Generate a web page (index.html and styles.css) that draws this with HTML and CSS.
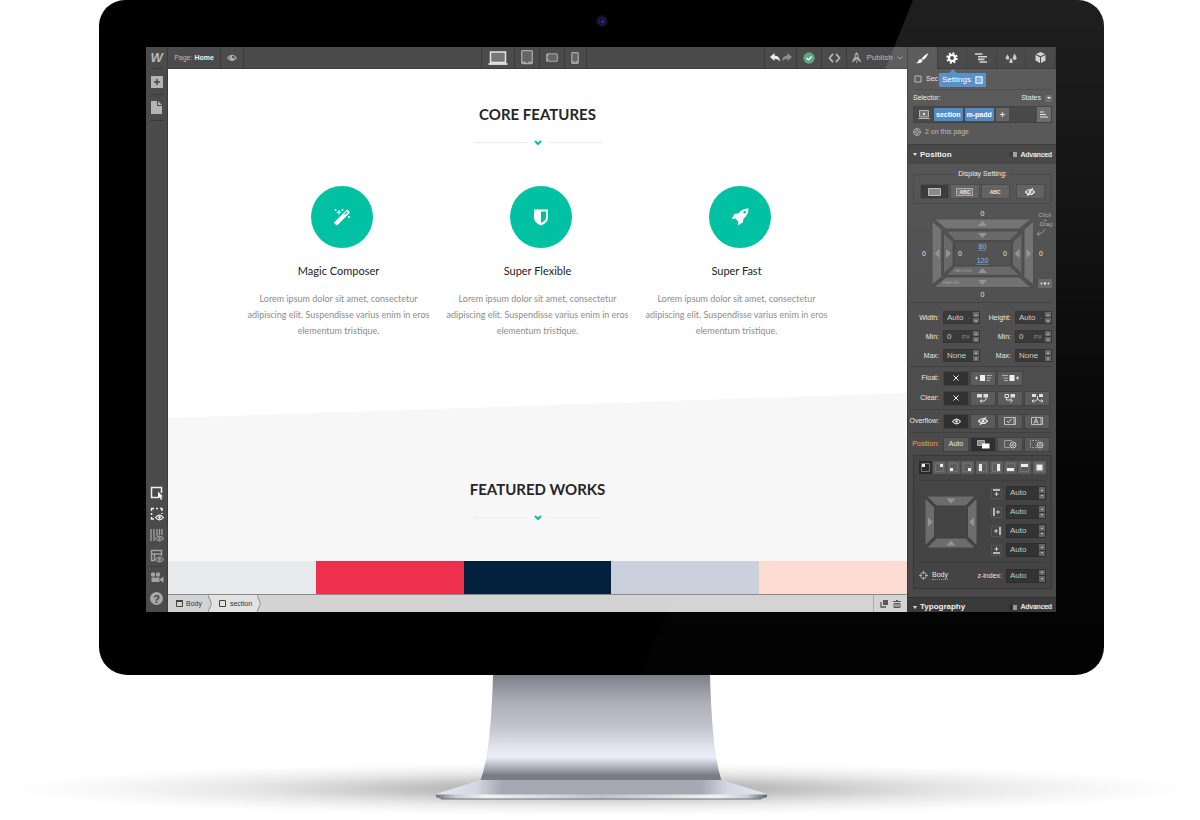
FILE: index.html
```html
<!DOCTYPE html>
<html lang="en">
<head>
<meta charset="utf-8">
<title>Site designer</title>
<link rel="stylesheet" href="styles.css">
</head>
<body>
<svg class="defs" aria-hidden="true">
  <symbol id="eye" viewBox="0 0 10 8"><path d="M0.5 4Q5-1.5 9.500 4Q5 9.500 .5 4Z" fill="none" stroke="currentColor" stroke-width="1.300"/><circle cx="5" cy="4" r="1.500" fill="currentColor"/></symbol>
  <symbol id="noeye" viewBox="0 0 10 8"><path d="M.5 4Q5-1 9.500 4Q5 9 .5 4Z" fill="none" stroke="currentColor" stroke-width="1.200"/><circle cx="5" cy="4" r="1.400" fill="currentColor"/><path d="M2 8L8 0" stroke="currentColor" stroke-width="1.200"/></symbol>
  <symbol id="cross" viewBox="0 0 8 8"><path d="M1.500 1.500L6.500 6.500M6.500 1.500L1.500 6.500" stroke="currentColor" stroke-width="1"/></symbol>
  <symbol id="divider" viewBox="0 0 128 12"><path d="M0 5.500H54M74 5.500H128" stroke="#ececec"/><path d="M61 4L64 7L67 4" fill="none" stroke="#00c2a3" stroke-width="2"/></symbol>
</svg>
<main class="monitor">
  <svg class="camera" viewBox="0 0 14 14" aria-hidden="true"><circle cx="7" cy="7" r="6" fill="#101016"/><circle cx="7" cy="7" r="3.500" fill="#11103c" stroke="#24215f"/><circle cx="7.500" cy="7.500" r="1.200" fill="#3b35c0"/></svg>
  <div class="screen">
    <nav class="rail" aria-label="Tools">
      <a class="logo" href="#home">W</a>
      <button class="tool add" aria-label="Add"><svg width="12" height="12"><path d="M0 0H12V12H0Z" fill="#b4b4b4"/><path d="M6 3V9M3 6H9" stroke="#444" stroke-width="1.500"/></svg></button>
      <button class="tool pages" aria-label="Pages"><svg width="11" height="13"><path d="M0 0H6V5H11V13H0ZM7 0L11 4H7Z" fill="#b4b4b4"/></svg></button>
      <div class="rail-low">
        <button class="tool on" aria-label="Select"><svg width="14" height="14"><path d="M8 11.500H1.500V1.500H11.500V7" fill="none" stroke="#eee" stroke-width="1.500"/><path d="M8 5.500L13 10.500L11 10.700L12.300 13.300L11 14L9.800 11.300L8 12.500Z" fill="#fff"/></svg></button>
        <button class="tool on" aria-label="Outlines"><svg width="14" height="14"><path d="M1.500 4V1.500H4M6 1.500H8M10 1.500H12V4M12 6V7M1.500 6V8M1.500 10V12H4" fill="none" stroke="#eee" stroke-width="1.500"/><use href="#eye" x="5" y="7" width="9" height="7"/></svg></button>
        <button class="tool" aria-label="Grid"><svg width="14" height="14"><path d="M1 1V13M4 1V13M7 1V8M9.500 1V7M12 1V7" stroke="#a2a2a2" stroke-width="1.300"/><use href="#eye" x="5" y="7" width="9" height="7"/></svg></button>
        <button class="tool" aria-label="Layout"><svg width="14" height="14"><path d="M5 11.500H1.500V1.500H11.500V7M1.500 5H11.500M4.500 5V11" fill="none" stroke="#a2a2a2" stroke-width="1.500"/><use href="#eye" x="5" y="7" width="9" height="7"/></svg></button>
        <button class="tool film" aria-label="Videos"><svg width="14" height="11"><circle cx="3" cy="2.500" r="2.200" fill="#a2a2a2"/><circle cx="8" cy="2.500" r="2.200" fill="#a2a2a2"/><path d="M1.500 5.500H9.500V10H1.500ZM10 7L13.500 4.500V10.500L10 8.500Z" fill="#a2a2a2"/></svg></button>
        <button class="help" aria-label="Help">?</button>
      </div>
    </nav>
    <div class="work">
      <header class="bar">
        <div class="group first">
          <button class="cell page-name">Page: <b>Home</b></button>
          <button class="cell preview" aria-label="Preview"><svg width="10" height="8"><path d="M.6 4Q5-1.500 9.400 4Q5 9.500 .6 4Z" fill="none" stroke="#b0b0b0" stroke-width="1.200"/><path d="M5 1.800V4H7.500A2.500 2.300 0 1 1 5 1.800Z" fill="#b0b0b0"/></svg></button>
        </div>
        <div class="group devices">
          <button class="cell desktop" aria-label="Desktop"><svg width="20" height="14"><path d="M2.500 1H17.500V11.500H2.500Z" fill="#777" stroke="#e6e6e6" stroke-width="1.500"/><path d="M.5 13H19.500" stroke="#f5f5f5" stroke-width="1.600"/></svg></button>
          <button class="cell" aria-label="Tablet"><svg width="12" height="15"><rect x=".7" y=".7" width="10.600" height="13" rx="1" fill="#666" stroke="#ababab" stroke-width="1.200"/><path d="M1 12.500H5M7 12.500H11" stroke="#ababab" stroke-width="1.500"/></svg></button>
          <button class="cell" aria-label="Phone landscape"><svg width="12" height="9"><rect x=".7" y=".7" width="10.600" height="7.500" rx="1" fill="#666" stroke="#ababab" stroke-width="1.100"/><path d="M1.500 1V3.500M1.500 5.500V8" stroke="#ababab" stroke-width="1.500"/></svg></button>
          <button class="cell phone" aria-label="Phone"><svg width="8" height="12"><rect x=".7" y=".7" width="6.600" height="10.600" rx="1" fill="#666" stroke="#ababab" stroke-width="1.200"/><path d="M1 10H3.500M4.500 10H7" stroke="#ababab" stroke-width="1.500"/></svg></button>
        </div>
        <div class="group last">
          <button class="cell history" aria-label="Undo and redo"><svg width="22" height="10"><path d="M0 4L4.500 0V2.500Q9.500 2.500 10 8.500Q8 5.500 4.500 5.700V8Z" fill="#eee"/><path d="M22 4L17.500 0V2.500Q12.500 2.500 12 8.500Q14 5.500 17.500 5.700V8Z" fill="#8d8d8d"/></svg></button>
          <button class="cell" aria-label="Saved"><svg width="12" height="12"><circle cx="6" cy="6" r="5.700" fill="#5fa583"/><path d="M3.500 6L5.500 8L8.700 4.500" fill="none" stroke="#fff" stroke-width="1.200"/></svg></button>
          <button class="cell" aria-label="Code"><svg width="13" height="10"><path d="M5 .8L1.500 5L5 9.200M8 .8L11.500 5L8 9.200" fill="none" stroke="#b4b4b4" stroke-width="1.800"/></svg></button>
          <button class="cell publish"><svg width="11" height="11"><path d="M5.500 0Q8 2 7.700 5L10.500 10.500L7.500 9L5.500 7.500L3.500 9L.5 10.500L3.300 5Q3 2 5.500 0ZM5 9H6V11H5Z" fill="#a9a9a9"/><circle cx="5.500" cy="4" r="1.100" fill="#4b4b4b"/></svg>Publish<svg width="6" height="4"><path d="M.5 .5L3 3L5.500 .5" fill="none" stroke="#a0a0a0"/></svg></button>
        </div>
      </header>
      <article class="canvas">
        <section class="features">
          <h2>CORE FEATURES</h2>
          <svg class="rule" width="128" height="12" aria-hidden="true"><use href="#divider"/></svg>
          <div class="cols">
            <div class="feature">
              <span class="disc"><svg width="18" height="18"><path d="M2.800 16.800L.8 14.800L13.300 2.300Q14.300 1.300 15.300 2.300L16.300 3.300Q17.300 4.300 16.300 5.300L4.800 16.800Q3.800 17.800 2.800 16.800Z" fill="#fff"/><path d="M12 6L14 4" stroke="#00c2a3" stroke-width="1.300" stroke-linecap="round"/><path d="M6 2V6.500M3.700 4.200H8.300M9.500 1V3M8.500 2H10.500M2.500 1V3M1.500 2H3.500M16 8V10M15 9H17" stroke="#fff" stroke-width="1"/></svg></span>
              <h3>Magic Composer</h3>
              <p>Lorem ipsum dolor sit amet, consectetur adipiscing elit. Suspendisse varius enim in eros elementum tristique.</p>
            </div>
            <div class="feature">
              <span class="disc"><svg width="14" height="17"><path d="M0 .5H14V8.500Q14 13.500 7 16.500Q0 13.500 0 8.500ZM7 2.500V14Q12 11.500 12 8.500V2.500Z" fill="#fff" fill-rule="evenodd"/></svg></span>
              <h3>Super Flexible</h3>
              <p>Lorem ipsum dolor sit amet, consectetur adipiscing elit. Suspendisse varius enim in eros elementum tristique.</p>
            </div>
            <div class="feature">
              <span class="disc"><svg width="18" height="18"><path d="M17.500 .5Q11 .5 7.500 5.500L3.500 6L.5 11L4.500 10.500L5.800 12L7.300 13.500L6.800 17.500L11.800 14.500L12.500 10.500Q17.500 7 17.500 .5Z" fill="#fff"/><circle cx="13.700" cy="4.300" r="1.300" fill="#00c2a3"/></svg></span>
              <h3>Super Fast</h3>
              <p>Lorem ipsum dolor sit amet, consectetur adipiscing elit. Suspendisse varius enim in eros elementum tristique.</p>
            </div>
          </div>
        </section>
        <section class="works">
          <h2>FEATURED WORKS</h2>
          <svg class="rule" width="128" height="12" aria-hidden="true"><use href="#divider"/></svg>
        </section>
        <div class="tiles"><i class="mist"></i><i class="red"></i><i class="navy"></i><i class="blue"></i><i class="peach"></i></div>
      </article>
      <footer class="crumbs">
        <a class="crumb" href="#body"><svg width="7" height="7"><path d="M.5 1H6.500V6.500H.5Z" fill="none" stroke="#444"/><path d="M0 1H7" stroke="#444" stroke-width="2"/></svg>Body</a>
        <svg class="sep" width="4" height="17" aria-hidden="true"><path d="M0 0L4 8.500L0 17H4V0Z" fill="#e2e2e2"/><path d="M0 0L3.500 8.500L0 17" fill="none" stroke="#8f8f8f"/></svg>
        <a class="crumb here" href="#section"><svg width="7" height="7"><path d="M.5 .5H6.500V6.500H.5Z" fill="none" stroke="#444"/></svg>section</a>
        <svg class="sep" width="4" height="17" aria-hidden="true"><path d="M0 0L4 8.500L0 17Z" fill="#e2e2e2"/><path d="M0 0L3.500 8.500L0 17" fill="none" stroke="#8f8f8f"/></svg>
        <div class="crumb-tools">
          <button aria-label="Duplicate"><svg width="8" height="8"><path d="M3 0H8V5H3Z" fill="#555"/><path d="M1 2V7H6" fill="none" stroke="#555" stroke-width="1.300"/></svg></button>
          <button aria-label="Delete"><svg width="8" height="8"><path d="M0 1.500H8M3 .5H5M1 4V7.500H7V3.500H1ZM3 4V7M5 4V7" fill="none" stroke="#555"/></svg></button>
        </div>
      </footer>
    </div>
    <aside class="panel">
      <div class="tabs">
        <button class="tab active" aria-label="Style"><svg width="13" height="11"><path d="M12.500 0Q8 2 5.500 5.500L7.500 7Q11 4 12.500 0ZM4.500 6Q7 6.500 6.500 8Q5 11 0 10Q2 9.500 2.500 7.500Q3 6 4.500 6Z" fill="#fff"/></svg></button>
        <button class="tab" aria-label="Settings"><svg width="12" height="12"><circle cx="6" cy="6" r="3" fill="none" stroke="#fff" stroke-width="2.200"/><circle cx="6" cy="6" r="4.700" fill="none" stroke="#fff" stroke-width="2" stroke-dasharray="1.900 1.790"/></svg></button>
        <button class="tab" aria-label="Navigator"><svg width="12" height="10"><path d="M0 1H7.500M3 3.800H12M3 6.400H9.500M4.500 9H12" stroke="#d0d0d0" stroke-width="1.600"/></svg></button>
        <button class="tab" aria-label="Assets"><svg width="12" height="10"><path d="M2.500 1.500Q5 5 4 6Q2.500 7 1 6Q0 5 2.500 1.500ZM6 5Q8.500 8.500 7.500 9.500Q6 10.500 4.500 9.500Q3.700 8.500 6 5ZM9.500 .5Q12.500 5 11.200 6.300Q9.500 7.500 8 6.300Q7 5 9.500 .5Z" fill="#c4c4c4"/></svg></button>
        <button class="tab" aria-label="Symbols"><svg width="11" height="11"><path d="M5.500 0L10 2L5.500 4.300L1 2ZM.5 3L5 5.300V11L.5 8.500ZM10.500 3L6 5.300V11L10.500 8.500Z" fill="#cfcfcf"/></svg></button>
        <div class="tip" role="tooltip">Settings <kbd>D</kbd></div>
      </div>
      <div class="selector">
        <div class="element"><svg width="8" height="8"><path d="M1 1H7V7H1Z" fill="none" stroke="#b5b5b5"/></svg>Sec</div>
        <div class="states"><span>Selector:</span><button>States <i class="drop"></i></button></div>
        <div class="classes">
          <svg class="lap" width="12" height="9"><path d="M1.500 .5H10.500V7H1.500Z" fill="#666" stroke="#aaa"/><path d="M0 8.500H12" stroke="#aaa"/><path d="M5 3L7 5M7 3L5 5" stroke="#ddd"/></svg>
          <button class="chip">section</button><button class="chip">m-padd</button><button class="plus" aria-label="Add class">+</button>
          <button class="sort" aria-label="Class menu"><svg width="8" height="7"><path d="M0 1H4M0 3.500H6M0 6H8" stroke="#e6e6e6"/></svg></button>
        </div>
        <div class="usage"><svg width="8" height="8"><circle cx="4" cy="4" r="3.400" fill="none" stroke="#aaa" stroke-width=".9"/><circle cx="4" cy="4" r="1.400" fill="none" stroke="#aaa" stroke-width=".8"/><path d="M4 0V2.500M4 5.500V8M0 4H2.500M5.500 4H8" stroke="#aaa" stroke-width=".8"/></svg>2 on this page</div>
      </div>
      <h4 class="head"><i class="tri"></i>Position<button class="adv"><i class="switch"></i>Advanced</button></h4>
      <div class="display">
        <fieldset>
          <legend>Display Setting:</legend>
          <button class="opt dark" aria-label="Block"><svg width="13" height="8"><path d="M.5 .5H12.500V7.500H.5Z" fill="#808080" stroke="#b8b8b8"/></svg></button>
          <button class="opt"><span class="abc boxed">ABC</span></button>
          <button class="opt"><span class="abc">ABC</span></button>
          <button class="opt none" aria-label="None"><svg width="10" height="8"><use href="#noeye"/></svg></button>
        </fieldset>
      </div>
      <div class="spacing">
        <svg class="boxes" viewBox="908 206 148 96" role="img" aria-label="Margin and padding">
          <g fill="#696969" stroke="#3c3c3c" stroke-width=".8">
            <path d="M934 219H1031L1019 229H946Z"/><path d="M934 287.500H1031L1019 277H946Z"/><path d="M932 221V285L941.500 277V229.500Z"/><path d="M1033.500 221V285L1024 277V229.500Z"/>
          </g>
          <g fill="#5f5f5f" stroke="#3a3a3a" stroke-width=".8">
            <path d="M946 231H1020L1010 240.500H955Z"/><path d="M946 275.500H1020L1010 266H955Z"/><path d="M943.500 233V274L953 265V242Z"/><path d="M1022 233V274L1012.500 265V242Z"/>
          </g>
          <path d="M954.500 241.500H1011V265.500H954.500Z" fill="#474747" stroke="#3c3c3c"/>
          <g fill="#8d8d8d"><path d="M978 226L982.500 221L987 226ZM978 233L982.500 238L987 233ZM978 273L982.500 268L987 273ZM978 280L982.500 285L987 280ZM939.500 249V258L934.500 253.500ZM946 249V258L951 253.500ZM1019.500 249V258L1014.500 253.500ZM1026.500 249V258L1031.500 253.500Z"/></g>
          <g fill="#e4e4e4" font-size="7" text-anchor="middle"><text x="982.500" y="215.500">0</text><text x="982.500" y="296.500">0</text><text x="924" y="256">0</text><text x="960" y="256">0</text><text x="1005" y="256">0</text><text x="1041" y="256">0</text></g>
          <g fill="#7db9ee" font-size="7" text-anchor="middle"><text x="982.500" y="249">80</text><text x="982.500" y="263">120</text></g>
          <path d="M978 250.500H987M976 264.500H989" stroke="#5b86ad" stroke-width=".7"/>
          <g fill="#999" font-size="4"><text x="954" y="272">PADDING</text><text x="943" y="284">MARGIN</text></g>
          <g fill="#a5a5a5" font-size="6" font-style="italic" text-anchor="middle"><text x="1045" y="216.500">Click</text><text x="1045" y="221.500">+</text><text x="1046" y="226">Drag</text></g>
          <path d="M1045 229Q1043 234 1037 234M1039.500 231.500L1037 234L1040 235.500" fill="none" stroke="#999" stroke-width=".8"/>
        </svg>
        <button class="more" aria-label="More spacing"><svg width="10" height="3"><circle cx="1.500" cy="1.500" r="1" fill="#ddd"/><circle cx="5" cy="1.500" r="1.200" fill="#ddd"/><circle cx="8.500" cy="1.500" r="1" fill="#ddd"/></svg></button>
      </div>
      <div class="sizes">
        <label for="w">Width:</label><span class="num"><input id="w" value="Auto"><em>-</em><span class="steps"><button aria-label="Increase"></button><button aria-label="Decrease"></button></span></span>
        <label for="h">Height:</label><span class="num"><input id="h" value="Auto"><em>-</em><span class="steps"><button aria-label="Increase"></button><button aria-label="Decrease"></button></span></span>
        <label for="mw">Min:</label><span class="num"><input id="mw" value="0"><em>PX</em><span class="steps"><button aria-label="Increase"></button><button aria-label="Decrease"></button></span></span>
        <label for="mh">Min:</label><span class="num"><input id="mh" value="0"><em>PX</em><span class="steps"><button aria-label="Increase"></button><button aria-label="Decrease"></button></span></span>
        <label for="xw">Max:</label><span class="num"><input id="xw" value="None"><span class="steps"><button aria-label="Increase"></button><button aria-label="Decrease"></button></span></span>
        <label for="xh">Max:</label><span class="num"><input id="xh" value="None"><span class="steps"><button aria-label="Increase"></button><button aria-label="Decrease"></button></span></span>
      </div>
      <div class="rows">
        <div class="row"><span>Float:</span><div class="seg">
          <button class="dark" aria-label="No float"><svg width="8" height="8"><use href="#cross"/></svg></button>
          <button aria-label="Left"><svg width="17" height="6"><path d="M0 3H3M1.500 1.500V4.500" stroke="#ddd"/><path d="M5 0H10V6H5Z" fill="#eee"/><path d="M11.500 .5H17M11.500 3H16M11.500 5.500H15" stroke="#aaa"/></svg></button>
          <button aria-label="Right"><svg width="17" height="6"><path d="M14 3H17M15.500 1.500V4.500" stroke="#ddd"/><path d="M7.500 0H12.500V6H7.500Z" fill="#eee"/><path d="M0 .5H6M1 3H6M2 5.500H6" stroke="#aaa"/></svg></button></div></div>
        <div class="row"><span>Clear:</span><div class="seg">
          <button class="dark" aria-label="No clear"><svg width="8" height="8"><use href="#cross"/></svg></button>
          <button aria-label="Clear left"><svg width="12" height="9"><path d="M0 0H5V3.500H0ZM6.500 0H11V3.500H6.500Z" fill="#ddd"/><path d="M9 4V5.500L7 7H3.500M5 5.500L3 7L5 8.500" fill="none" stroke="#ddd"/></svg></button>
          <button aria-label="Clear right"><svg width="12" height="9"><path d="M6.500 0H11V3.500H6.500Z" fill="#ddd"/><path d="M1 .5H4.500V3.500H1ZM2.500 4V6H8M6.500 4.500L8.500 6.500L6.500 8.500" fill="none" stroke="#ddd"/></svg></button>
          <button aria-label="Clear both"><svg width="13" height="9"><path d="M1 0H5V3H1ZM8 0H12V3H8Z" fill="#ddd"/><path d="M6.500 2V5L4.500 7H1M2.500 5.500L1 7L2.500 8.500M6.500 5L8.500 7H12M10.500 5.500L12 7L10.500 8.500" fill="none" stroke="#ddd"/></svg></button></div></div>
        <div class="row ruled"><span>Overflow:</span><div class="seg">
          <button class="dark" aria-label="Visible"><svg width="9" height="7"><use href="#eye"/></svg></button>
          <button aria-label="Hidden"><svg width="10" height="8"><use href="#noeye"/></svg></button>
          <button aria-label="Scroll"><svg width="12" height="8"><path d="M.5 .5H11.500V7.500H.5ZM10 0V8" fill="none" stroke="#bbb"/><path d="M3 4L4.500 5.500L7.500 2" fill="none" stroke="#ddd"/></svg></button>
          <button aria-label="Auto overflow"><svg width="12" height="8"><path d="M.5 .5H11.500V7.500H.5ZM10 0V8" fill="none" stroke="#bbb"/><path d="M3 6.500L5 1.500L7 6.500M3.500 5H6.500" fill="none" stroke="#ddd" stroke-width=".8"/></svg></button></div></div>
        <div class="row ruled"><span class="hot">Position:</span><div class="seg">
          <button>Auto</button>
          <button class="dark" aria-label="Relative"><svg width="13" height="9"><path d="M.5 .5H7.500V5.500H.5Z" fill="#888" stroke="#aaa"/><path d="M5 3.500H12.500V8.500H5Z" fill="#fff"/></svg></button>
          <button aria-label="Absolute"><svg width="13" height="9"><path d="M6 7.500H.5V.5H8" fill="none" stroke="#999"/><circle cx="9" cy="5" r="3" fill="#555" stroke="#ccc"/><path d="M9 3V7M7 5H11" stroke="#ccc" stroke-width=".8"/></svg></button>
          <button aria-label="Fixed"><svg width="14" height="9"><path d="M7 7.500H.5V.5H9" fill="none" stroke="#999" stroke-dasharray="2 1"/><circle cx="10" cy="5" r="3" fill="#555" stroke="#ccc"/><path d="M10 3V7M8 5H12" stroke="#ccc" stroke-width=".8"/></svg></button></div></div>
      </div>
      <div class="placement">
        <div class="presets">
          <div class="set">
            <button class="dark" aria-label="Top left"><svg width="9" height="9"><path d="M.5 .5H8.500V8.500H.5Z" class="edge"/><path d="M1 1H4V4H1Z" class="fill"/></svg></button>
            <button aria-label="Top right"><svg width="9" height="9"><path d="M.5 .5H8.500V8.500H.5Z" class="edge"/><path d="M5 1H8V4H5Z" class="fill"/></svg></button>
            <button aria-label="Bottom left"><svg width="9" height="9"><path d="M.5 .5H8.500V8.500H.5Z" class="edge"/><path d="M1 5H4V8H1Z" class="fill"/></svg></button>
            <button aria-label="Bottom right"><svg width="9" height="9"><path d="M.5 .5H8.500V8.500H.5Z" class="edge"/><path d="M5 5H8V8H5Z" class="fill"/></svg></button>
          </div>
          <div class="set">
            <button aria-label="Left"><svg width="9" height="9"><path d="M.5 .5H8.500V8.500H.5Z" class="edge"/><path d="M1 1H4V8H1Z" class="fill"/></svg></button>
            <button aria-label="Right"><svg width="9" height="9"><path d="M.5 .5H8.500V8.500H.5Z" class="edge"/><path d="M5 1H8V8H5Z" class="fill"/></svg></button>
            <button aria-label="Bottom"><svg width="9" height="9"><path d="M.5 .5H8.500V8.500H.5Z" class="edge"/><path d="M1 5H8V8H1Z" class="fill"/></svg></button>
            <button aria-label="Top"><svg width="9" height="9"><path d="M.5 .5H8.500V8.500H.5Z" class="edge"/><path d="M1 1H8V4H1Z" class="fill"/></svg></button>
          </div>
          <div class="set"><button aria-label="Full"><svg width="9" height="9"><path d="M.5 .5H8.500V8.500H.5Z" class="edge"/><path d="M1.500 1.500H7.500V7.500H1.500Z" class="fill"/></svg></button></div>
        </div>
        <div class="offsets">
          <svg class="frame" viewBox="0 0 52 52" role="img" aria-label="Offsets"><g fill="#6a6a6a" stroke="#363636" stroke-width=".8"><path d="M1.500 0H50.500L40.500 10H11.500Z"/><path d="M1.500 52H50.500L40.500 42H11.500Z"/><path d="M0 2V50L9.500 40.500V11.500Z"/><path d="M52 2V50L42.500 40.500V11.500Z"/></g><path d="M21.500 2.500H30.500L26 7.500ZM21.500 49.500H30.500L26 44.500ZM3 21.500V30.500L8 26ZM49 21.500V30.500L44 26Z" fill="#929292"/></svg>
          <div class="sides">
            <label for="ot" aria-label="Top"><svg width="7" height="8"><path d="M0 1H7" stroke="#ddd" stroke-width="1.500"/><path d="M3.500 3V7M1.500 5H5.500" stroke="#ccc"/></svg></label><span class="num"><input id="ot" value="Auto"><span class="steps"><button aria-label="Increase"></button><button aria-label="Decrease"></button></span></span>
            <label for="ol" aria-label="Left"><svg width="8" height="8"><path d="M1 0V8" stroke="#ddd" stroke-width="1.500"/><path d="M5 2V6M3 4H7" stroke="#ccc"/></svg></label><span class="num"><input id="ol" value="Auto"><span class="steps"><button aria-label="Increase"></button><button aria-label="Decrease"></button></span></span>
            <label for="or" aria-label="Right"><svg width="8" height="8"><path d="M7 0V8" stroke="#ddd" stroke-width="1.500"/><path d="M3 2V6M1 4H5" stroke="#ccc"/></svg></label><span class="num"><input id="or" value="Auto"><span class="steps"><button aria-label="Increase"></button><button aria-label="Decrease"></button></span></span>
            <label for="ob" aria-label="Bottom"><svg width="7" height="8"><path d="M0 7H7" stroke="#ddd" stroke-width="1.500"/><path d="M3.500 1V5M1.500 3H5.500" stroke="#ccc"/></svg></label><span class="num"><input id="ob" value="Auto"><span class="steps"><button aria-label="Increase"></button><button aria-label="Decrease"></button></span></span>
          </div>
        </div>
        <div class="stack">
          <svg width="9" height="9" aria-hidden="true"><circle cx="4.500" cy="4.500" r="3" fill="none" stroke="#aaa"/><path d="M4.500 0V3M4.500 6V9M0 4.500H3M6 4.500H9" stroke="#aaa"/></svg><a href="#body">Body</a>
          <label for="z">z-index:</label><span class="num"><input id="z" value="Auto"><span class="steps"><button aria-label="Increase"></button><button aria-label="Decrease"></button></span></span>
        </div>
      </div>
      <h4 class="head cut"><i class="tri"></i>Typography<button class="adv"><i class="switch"></i>Advanced</button></h4>
    </aside>
  </div>
  <div class="glare"></div>
</main>
<svg class="stand" viewBox="0 675 1200 145" aria-hidden="true">
  <defs>
    <linearGradient id="neck" x1="0" y1="675" x2="0" y2="781" gradientUnits="userSpaceOnUse"><stop offset="0" stop-color="#7e8089"/><stop offset=".25" stop-color="#abaeb6"/><stop offset=".5" stop-color="#c2c5cd"/><stop offset=".7" stop-color="#e5e8f2"/><stop offset=".78" stop-color="#e9ecf6"/><stop offset=".88" stop-color="#a6a9b1"/><stop offset=".95" stop-color="#777a82"/><stop offset="1" stop-color="#7b7e86"/></linearGradient>
    <linearGradient id="foot"><stop offset="0" stop-color="#e2e7f0"/><stop offset=".12" stop-color="#d3d8e2"/><stop offset=".2" stop-color="#a5a8b1"/><stop offset=".8" stop-color="#a5a8b1"/><stop offset=".88" stop-color="#d3d8e2"/><stop offset="1" stop-color="#e2e7f0"/></linearGradient>
    <linearGradient id="lip"><stop offset="0" stop-color="#70737b"/><stop offset=".06" stop-color="#c9ccd3"/><stop offset=".15" stop-color="#f2f3f6"/><stop offset=".5" stop-color="#bfc1c8"/><stop offset=".85" stop-color="#f2f3f6"/><stop offset=".94" stop-color="#c9ccd3"/><stop offset="1" stop-color="#63666e"/></linearGradient>
    <radialGradient id="pool"><stop offset="0" stop-color="#8c8c8c" stop-opacity=".9"/><stop offset=".3" stop-color="#969696" stop-opacity=".6"/><stop offset=".6" stop-color="#aaa" stop-opacity=".28"/><stop offset="1" stop-color="#ccc" stop-opacity="0"/></radialGradient>
  </defs>
  <ellipse cx="601" cy="789" rx="600" ry="27" fill="url(#pool)"/>
  <path d="M493 675H710Q712 750 721 779L723 783H479L481 779Q491 750 493 675Z" fill="url(#neck)"/>
  <path d="M480 780H722L767 794V797H436V794Z" fill="url(#foot)"/>
  <path d="M436 794.500H767V797L761 799H441L436 797Z" fill="url(#lip)"/>
  <path d="M441 799H761" stroke="#70727a"/>
</svg>
</body>
</html>
```
FILE: styles.css
```css
* { box-sizing: border-box; }
body { margin: 0; background: #fff; font: 7px/10px "Liberation Sans", Arial, sans-serif; color: #e8e8e8; }
button, input { font: inherit; color: inherit; border: 0; padding: 0; margin: 0; background: none; }
button { display: flex; align-items: center; justify-content: center; cursor: pointer; }
svg { display: block; flex: none; }
.defs { position: absolute; width: 0; height: 0; }
h2, h3, h4, p { margin: 0; }
a { color: inherit; text-decoration: none; }

.monitor { position: relative; margin: 0 96px 0 99px; padding: 47px 48px 63px 47px; background: #000; border-radius: 26px 26px 28px 28px; overflow: hidden; }
.camera { position: absolute; top: 14px; left: 50%; margin-left: -7px; width: 14px; height: 14px; }
.glare { position: absolute; inset: 0; pointer-events: none; background: linear-gradient(rgba(255,255,255,.12), rgba(255,255,255,.08) 30%, rgba(255,255,255,.02) 70%, rgba(255,255,255,.01)); clip-path: polygon(81% 0, 100% 0, 100% 100%, 54% 100%); }
.screen { display: grid; grid-template-columns: 22px 1fr 149px; }

.rail { display: flex; flex-direction: column; align-items: center; background: #4b4b4b; border-right: 1px solid #3c3c3c; color: #a2a2a2; }
.logo { width: 12px; height: 22px; font: italic bold 13px/22px "Liberation Sans", Arial, sans-serif; color: #b8b8b8; border-bottom: 1px solid #393939; }
.tool { width: 14px; height: 21px; }
.tool.on { color: #fff; }
.add, .pages { height: 26px; border-bottom: 1px solid #393939; }
.rail-low { margin-top: auto; display: flex; flex-direction: column; align-items: center; padding-bottom: 7px; }
.film { height: 22px; border-top: 1px solid #393939; }
.help { width: 13px; height: 13px; margin-top: 4px; border-radius: 50%; background: #a8a8a8; color: #444; font-weight: bold; font-size: 11px; }

.work { display: flex; flex-direction: column; min-width: 0; }
.bar { display: grid; grid-template-columns: 1fr auto 1fr; height: 22px; background: #4b4b4b; border-bottom: 1px solid #3d3d3d; color: #b9b9b9; }
.group { display: flex; }
.devices { margin-right: 8px; border-left: 1px solid #3a3a3a; }
.last { justify-content: flex-end; }
.cell { width: 25px; border-right: 1px solid #3a3a3a; }
.page-name { width: 53px; gap: 2px; }
.page-name b { color: #f4f4f4; }
.preview { width: 23px; }
.desktop { width: 33px; }
.phone { width: 22px; }
.history { width: 33px; border-left: 1px solid #3a3a3a; }
.publish { width: 60px; gap: 4px; font-size: 8px; border: 0; }

.canvas { flex: 1; display: flex; flex-direction: column; background: #fff; font-family: Lato, sans-serif; text-align: center; color: #222; }
.canvas h2 { font-size: 15px; line-height: 20px; font-weight: bold; color: #26262a; }
.rule { margin: 13px auto 0; }
.features { padding: 35px 71px 54px; }
.cols { display: grid; grid-template-columns: repeat(3, 1fr); margin-top: 37px; }
.feature { padding: 0 4px; }
.disc { display: flex; align-items: center; justify-content: center; width: 62px; height: 62px; margin: 0 auto; border-radius: 50%; background: #00c2a3; position: relative; left: 3px; }
.feature h3 { margin-top: 15px; font-size: 11px; line-height: 16px; font-weight: normal; }
.feature p { margin-top: 12px; font-size: 9px; line-height: 16px; color: #8c8c8c; }
.works { padding: 86px 0 37px; background: #f7f7f7; clip-path: polygon(0 25px, 100% 0, 100% 100%, 0 100%); }
.tiles { flex: 1; min-height: 33px; display: grid; grid-template-columns: repeat(5, 1fr); }
.mist { background: #e6eaed; }
.red { background: #ee304d; }
.navy { background: #04203f; }
.blue { background: #cbcfdc; }
.peach { background: #fddbd0; }

.crumbs { display: flex; height: 18px; background: #d3d3d3; border-top: 1px solid #8a8a8a; color: #333; }
.crumb { display: flex; align-items: center; gap: 3px; padding: 0 6px 0 8px; }
.here { background: #e2e2e2; padding: 0 5px 0 7px; gap: 4px; }
.crumb-tools { margin-left: auto; display: flex; gap: 5px; padding: 0 6px; border-left: 1px solid #aaa; }

.panel { background: #464646; border-left: 1px solid #333; min-width: 0; }
.tabs { position: relative; display: grid; grid-template-columns: repeat(5, 1fr); height: 22px; background: #353535; }
.tab { border-right: 1px solid #292929; border-bottom: 1px solid #292929; }
.tab.active { background: #484848; border-bottom: 0; }
.tip { position: absolute; top: 26px; left: 31px; display: flex; align-items: center; gap: 4px; height: 14px; padding: 0 3px; background: #4484c4; border-radius: 1px; color: #fff; font-size: 8px; }
.tip::before { content: ""; position: absolute; left: 10px; top: -4px; border: 4px solid transparent; border-top: 0; border-bottom-color: #4484c4; }
.tip kbd { width: 8px; height: 8px; border-radius: 1px; background: #b9d2ec; color: #2f6cab; font: bold 6px/8px "Liberation Sans", sans-serif; text-align: center; }
.selector { height: 75px; padding: 0 4px 0 5px; background: #484848; }
.element { display: flex; align-items: center; gap: 4px; height: 21px; padding-left: 1px; border-bottom: 1px solid #3a3a3a; }
.states { display: flex; justify-content: space-between; align-items: center; height: 16px; }
.states button { gap: 4px; }
.drop { display: flex; align-items: center; justify-content: center; width: 7px; height: 7px; background: #5e5e5e; }
.drop::after { content: ""; border: 2px solid transparent; border-top-color: #eee; border-bottom: 0; }
.classes { display: flex; align-items: center; gap: 2px; height: 17px; background: #363636; border: 1px solid #2f2f2f; }
.lap { margin: 0 2px 0 4px; }
.chip { height: 13px; padding: 0 2px; background: #3f7fbd; color: #fff; font-weight: bold; border-radius: 1px; }
.plus { width: 13px; height: 13px; background: #565656; font-weight: bold; font-size: 9px; }
.sort { width: 14px; align-self: stretch; margin-left: auto; background: #5e5e5e; }
.usage { display: flex; align-items: center; gap: 4px; height: 18px; color: #b5b5b5; }

.head { display: flex; align-items: center; gap: 3px; height: 20px; padding: 0 4px 0 5px; background: #373737; border-top: 1px solid #2b2b2b; font-size: 8px; color: #eee; }
.tri { border: 2px solid transparent; border-top: 3px solid #ddd; border-bottom: 0; }
.adv { margin-left: auto; gap: 4px; font-size: 7px; font-weight: normal; text-shadow: 0 0 1px #ccc; }
.switch { display: block; width: 8px; height: 5px; background: #2a2a2a; border-right: 4px solid #999; }
.cut { height: 15px; margin-top: 8px; padding-top: 4px; }

.display { padding: 5px 4px 0 5px; height: 42px; }
fieldset { display: flex; gap: 1px; margin: 0; padding: 5px 6px 4px; border: 1px solid #393939; border-radius: 1px; min-width: 0; }
legend { margin: 0 auto; padding: 0 3px; }
.opt { flex: 1; height: 15px; background: #565656; border: 1px solid #3c3c3c; }
.none { margin-left: 5px; }
.dark, .opt.dark { background: #2a2a2a; }
.abc { font-size: 5px; line-height: 6px; font-weight: bold; }
.boxed { padding: 0 2px; background: #707070; outline: 1px solid #a0a0a0; }
.spacing { position: relative; }
.boxes { width: 100%; height: auto; font-family: "Liberation Sans", Arial, sans-serif; }
.more { position: absolute; right: 4px; bottom: 14px; width: 14px; height: 9px; background: #606060; border-radius: 1px; }

.sizes { display: grid; grid-template-columns: 28px 1fr 27px 1fr; gap: 6px 4px; margin: 0 4px 0 3px; padding: 8px 0 4px; border-top: 1px solid #383838; border-bottom: 1px solid #383838; align-items: center; }
.sizes label, .row > span { text-align: right; white-space: nowrap; }
.num { display: flex; gap: 1px; height: 13px; background: #303030; border: 1px solid #2a2a2a; font-size: 8px; min-width: 0; }
.num input { flex: 1; min-width: 0; width: 0; padding-left: 3px; color: #c9c9c9; }
.num em { align-self: center; font-style: normal; font-size: 6px; color: #888; padding-right: 2px; }
.steps { display: grid; gap: 1px; width: 6px; }
.steps button { background: #616161; }
.steps button::after { content: ""; border: 1px solid transparent; border-bottom: 2px solid #ccc; border-top: 0; }
.steps button + button::after { border-bottom: 0; border-top: 2px solid #ccc; }
.rows { padding-top: 1px; }
.row { display: grid; grid-template-columns: 30px 1fr; gap: 4px; align-items: center; height: 20px; margin: 0 4px 0 1px; }
.ruled { height: 23px; border-top: 1px solid #3a3a3a; }
.ruled:nth-child(3) { margin-top: 1px; }
.row .hot { color: #e8a04c; }
.seg { display: flex; gap: 1px; }
.seg button { width: 26px; height: 15px; background: #565656; border: 1px solid #3c3c3c; }
.seg button.dark { background: #2a2a2a; }

.placement { margin: 0 4px 0 5px; padding: 5px 5px 0; background: #414141; border: 1px solid #343434; }
.presets { display: flex; justify-content: space-between; padding-bottom: 6px; border-bottom: 1px solid #383838; }
.set { display: flex; gap: 1px; }
.set button { width: 13px; height: 13px; background: #5a5a5a; }
.set button.dark { background: #262626; }
.edge { fill: none; stroke: #6e6e6e; }
.fill { fill: #eee; }
.offsets { display: flex; justify-content: space-between; padding: 5px 0 5px 6px; border-bottom: 1px solid #383838; }
.frame { width: 52px; height: 52px; margin-top: 10px; }
.sides { display: grid; grid-template-columns: 11px 40px; gap: 5px 4px; align-items: center; }
.sides label { display: flex; align-items: center; justify-content: center; height: 11px; border: 1px solid #525252; }
.sides .num, .stack .num { height: 14px; }
.stack { display: flex; align-items: center; gap: 4px; height: 25px; }
.stack a { border-bottom: 1px dotted #999; line-height: 8px; }
.stack label { margin-left: auto; }
.stack .num { width: 40px; }

.stand { width: 100%; height: auto; }
```
